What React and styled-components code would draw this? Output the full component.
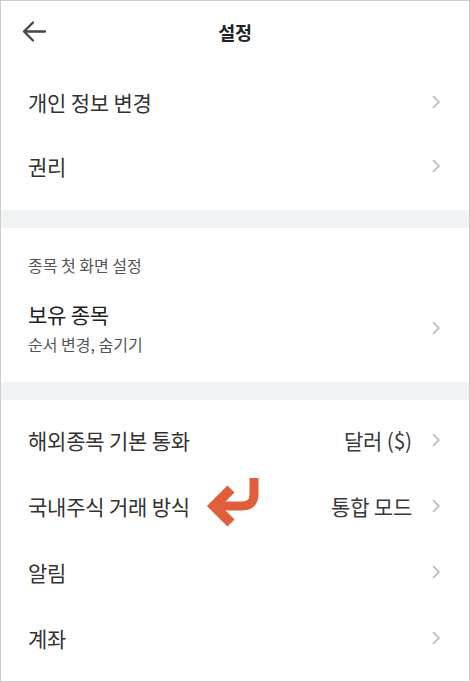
import styled, { createGlobalStyle } from 'styled-components';

const Global = createGlobalStyle`
  body {
    margin: 0;
    background: #fff;
    font-family: "Noto Sans CJK KR", "Noto Sans", sans-serif;
  }
`

const Screen = styled.div`
  width: 470px;
  height: 682px;
  box-sizing: border-box;
  border: 1px solid #cdcdcd;
  background: #fff;
  overflow: hidden;
  display: flex;
  flex-direction: column;
`

const Header = styled.div`
  height: 61px;
  display: grid;
  grid-template-columns: 60px 1fr 60px;
  align-items: center;
`

const BackButton = styled.div`
  display: flex;
  align-items: center;
  padding-left: 20px;
`

const Title = styled.div`
  text-align: center;
  font-size: 18.5px;
  font-weight: 700;
  color: #222;
  letter-spacing: -0.3px;
`

const Section = styled.div`
  padding: ${(p) => p.$pad || '0'};
  display: flex;
  flex-direction: column;
`

const Divider = styled.div`
  height: 18px;
  background: #f2f3f5;
`

const Row = styled.div`
  position: relative;
  height: ${(p) => p.$h || 64}px;
  display: flex;
  align-items: center;
  padding: 0 28px 0 27px;
`

const Label = styled.div`
  flex: 1;
  font-size: 21px;
  color: #333;
  letter-spacing: -0.2px;
`

const Value = styled.div`
  font-size: 21px;
  color: #3a3a3a;
  margin-right: 20px;
  letter-spacing: -0.2px;
`

const SectionLabel = styled.div`
  padding-left: 27px;
  font-size: 16px;
  line-height: 22px;
  color: #555;
  margin-bottom: 24px;
`

const Stack = styled.div`
  flex: 1;
  display: flex;
  flex-direction: column;
  gap: 5px;
`

const StackTitle = styled.div`
  font-size: 21px;
  line-height: 28px;
  color: #1f1f1f;
  letter-spacing: -0.2px;
`

const StackSub = styled.div`
  font-size: 16px;
  line-height: 22px;
  color: #555;
`

const Pointer = styled.svg`
  position: absolute;
  left: 200px;
  top: 0;
`

function Chevron() {
  return (
    <svg width="9" height="14" viewBox="0 0 9 14">
      <polyline points="1.5,1.5 7,7 1.5,12.5" fill="none" stroke="#b4b4b4" strokeWidth="1.6" strokeLinecap="round" strokeLinejoin="round" />
    </svg>
  );
}

function BackArrow() {
  return (
    <svg width="26" height="24" viewBox="0 0 26 24">
      <path d="M3 11.5 H24 M12 2.5 L3 11.5 L12 20.5" fill="none" stroke="#464646" strokeWidth="2.3" strokeLinecap="round" strokeLinejoin="round" />
    </svg>
  );
}

function Item({ label, value, h, children }) {
  return (
    <Row $h={h}>
      <Label>{label}</Label>
      {value && <Value>{value}</Value>}
      <Chevron />
      {children}
    </Row>
  );
}

export default function App() {
  return (
    <>
      <Global />
      <Screen>
        <Header>
          <BackButton><BackArrow /></BackButton>
          <Title>설정</Title>
          <div />
        </Header>

        <Section $pad="8px 0 12px">
          <Item label="개인 정보 변경" />
          <Item label="권리" />
        </Section>

        <Divider />

        <Section $pad="26px 0 27px">
          <SectionLabel>종목 첫 화면 설정</SectionLabel>
          <Row $h={55}>
            <Stack>
              <StackTitle>보유 종목</StackTitle>
              <StackSub>순서 변경, 숨기기</StackSub>
            </Stack>
            <Chevron />
          </Row>
        </Section>

        <Divider />

        <Section $pad="7px 0 0">
          <Item label="해외종목 기본 통화" value="달러 ($)" h={66} />
          <Item label="국내주식 거래 방식" value="통합 모드" h={66}>
            <Pointer width="64" height="56" viewBox="0 0 64 56">
              <path d="M53 5 V21 Q53 33 41 33 H20" fill="none" stroke="#df5f3b" strokeWidth="9" />
              <polyline points="30,16 13,33 30,50" fill="none" stroke="#df5f3b" strokeWidth="10" strokeLinejoin="miter" />
            </Pointer>
          </Item>
          <Item label="알림" h={66} />
          <Item label="계좌" h={66} />
        </Section>
      </Screen>
    </>
  );
}
